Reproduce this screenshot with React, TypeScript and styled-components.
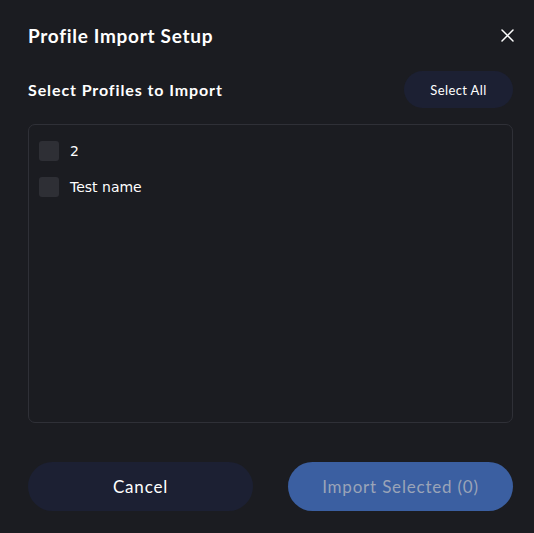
import React, {useState} from "react";
import styled, {createGlobalStyle} from "styled-components";

const GlobalStyle = createGlobalStyle`
    html, body {
        margin: 0;
        padding: 0;
        background: #1b1c21;
    }
`

const Dialog = styled.div`
    width: 534px;
    height: 533px;
    box-sizing: border-box;
    padding: 0 21px 0 28px;
    background: #1b1c21;
    display: flex;
    flex-direction: column;
    font-family: "Lato", "Inter", sans-serif;
    color: #ffffff;
`

const Header = styled.div`
    display: flex;
    align-items: center;
    justify-content: space-between;
    height: 71px;
`

const Title = styled.h2`
    margin: 0;
    font-size: 19px;
    font-weight: 700;
    letter-spacing: 0.7px;
`

const CloseButton = styled.button`
    width: 22px;
    height: 22px;
    padding: 0;
    border: none;
    background: transparent;
    display: flex;
    align-items: center;
    justify-content: center;
    margin-right: -5px;
    cursor: pointer;
`

const Toolbar = styled.div`
    display: flex;
    align-items: center;
    justify-content: space-between;
    height: 37px;
`

const SubTitle = styled.h3`
    margin: 0;
    font-size: 16px;
    font-weight: 700;
    letter-spacing: 0.9px;
`

const PillButton = styled.button<{ $primary?: boolean }>`
    border: none;
    border-radius: 999px;
    font-family: "Lato", "Inter", sans-serif;
    background: ${p => p.$primary ? "#3b5fa1" : "#1c2033"};
    color: ${p => p.$primary ? "#9aa4b8" : "#ffffff"};
    cursor: pointer;
`

const SelectAllButton = styled(PillButton)`
    width: 109px;
    height: 37px;
    font-size: 13px;
    letter-spacing: 0.4px;
`

const ProfileList = styled.div`
    margin-top: 16px;
    height: 299px;
    box-sizing: border-box;
    border: 1px solid #2f3037;
    border-radius: 7px;
    padding: 16px 10px;
    display: flex;
    flex-direction: column;
    gap: 16px;
`

const ProfileRow = styled.label`
    display: flex;
    align-items: center;
    gap: 11px;
    font-family: "DejaVu Sans", sans-serif;
    font-size: 14px;
    color: #ffffff;
    cursor: pointer;
`

const CheckBox = styled.span<{ $checked: boolean }>`
    width: 20px;
    height: 20px;
    border-radius: 3px;
    background: ${p => p.$checked ? "#3b5fa1" : "#2e2f35"};
    flex-shrink: 0;
`

const Footer = styled.div`
    margin-top: 39px;
    display: flex;
    justify-content: space-between;
`

const FooterButton = styled(PillButton)`
    width: 225px;
    height: 49px;
    font-size: 17px;
    letter-spacing: 0.8px;
`

const profiles = ["2", "Test name"]

export default function App() {
    const [selected, setSelected] = useState<string[]>([])

    const toggle = (name: string) => {
        setSelected(s => s.includes(name) ? s.filter(n => n !== name) : [...s, name])
    }

    return (
        <>
            <GlobalStyle/>
            <Dialog>
                <Header>
                    <Title>Profile Import Setup</Title>
                    <CloseButton aria-label="Close">
                        <svg width="13" height="13" viewBox="0 0 13 13" fill="none">
                            <path d="M1 1L12 12M12 1L1 12" stroke="#ffffff" strokeWidth="1.5" strokeLinecap="round"/>
                        </svg>
                    </CloseButton>
                </Header>
                <Toolbar>
                    <SubTitle>Select Profiles to Import</SubTitle>
                    <SelectAllButton onClick={() => setSelected(profiles)}>Select All</SelectAllButton>
                </Toolbar>
                <ProfileList>
                    {profiles.map(name => (
                        <ProfileRow key={name} onClick={() => toggle(name)}>
                            <CheckBox $checked={selected.includes(name)}/>
                            {name}
                        </ProfileRow>
                    ))}
                </ProfileList>
                <Footer>
                    <FooterButton>Cancel</FooterButton>
                    <FooterButton $primary>Import Selected ({selected.length})</FooterButton>
                </Footer>
            </Dialog>
        </>
    )
}
